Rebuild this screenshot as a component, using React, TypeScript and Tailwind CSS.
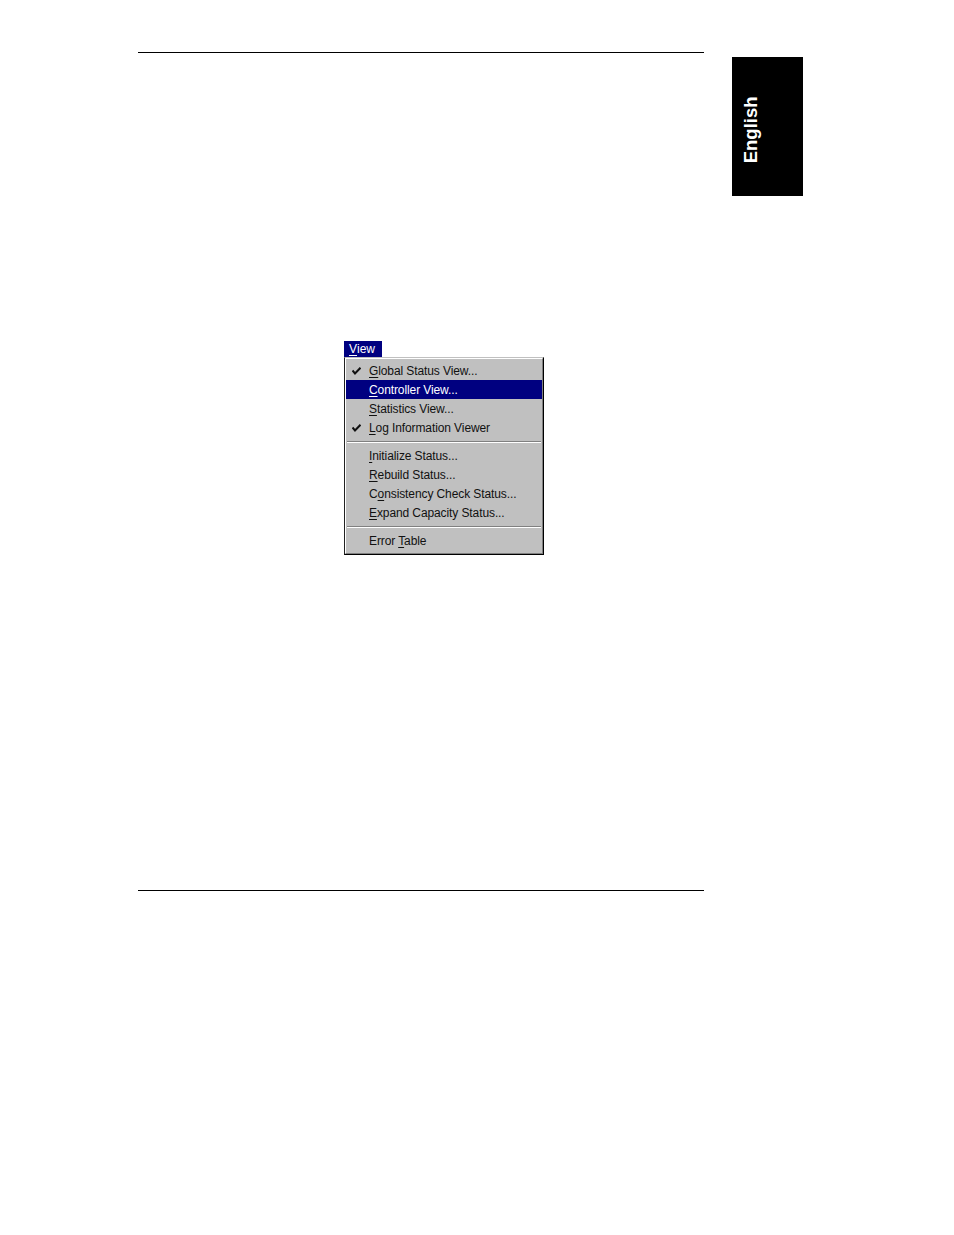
import React from 'react'

type Item = { pre: string; key: string; post: string; checked?: boolean; active?: boolean }

const groups: Item[][] = [
  [
    { pre: '', key: 'G', post: 'lobal Status View...', checked: true },
    { pre: '', key: 'C', post: 'ontroller View...', active: true },
    { pre: '', key: 'S', post: 'tatistics View...' },
    { pre: '', key: 'L', post: 'og Information Viewer', checked: true },
  ],
  [
    { pre: '', key: 'I', post: 'nitialize Status...' },
    { pre: '', key: 'R', post: 'ebuild Status...' },
    { pre: 'C', key: 'o', post: 'nsistency Check Status...' },
    { pre: '', key: 'E', post: 'xpand Capacity Status...' },
  ],
  [{ pre: 'Error ', key: 'T', post: 'able' }],
]

function Check() {
  return (
    <svg width="9" height="8" viewBox="0 0 9 8" className="absolute left-[6px] top-[6px]">
      <path d="M0.5 3.5 L3 6.5 L8.5 0.8" fill="none" stroke="currentColor" strokeWidth="2" />
    </svg>
  )
}

function Row({ item }: { item: Item }) {
  return (
    <div
      className={`relative flex h-[19px] items-center pl-[23px] ${
        item.active ? 'bg-[#000080] text-white' : 'text-[#111]'
      }`}
    >
      {item.checked && <Check />}
      <span className="tracking-[-0.1px]">
        {item.pre}
        <span className="underline underline-offset-2">{item.key}</span>
        {item.post}
      </span>
    </div>
  )
}

function Separator() {
  return (
    <div className="flex h-[9px] flex-col justify-center px-[1px]">
      <div className="h-px bg-[#808080]" />
      <div className="h-px bg-white" />
    </div>
  )
}

function ViewMenu() {
  return (
    <div className="flex flex-col items-start text-[12px] leading-none" style={{ fontFamily: '"Liberation Sans", Arial, sans-serif' }}>
      <div className="flex h-[16px] w-[38px] items-center bg-[#000080] pl-[5px] text-white">
        <span className="underline underline-offset-2">V</span>iew
      </div>
      <div className="w-[200px] border border-t-[#c0c0c0] border-l-[#202020] border-r-black border-b-black">
        <div className="border border-t-white border-l-white border-r-[#808080] border-b-[#808080] bg-[#c0c0c0] pt-[2px] pb-[3px]">
          {groups.map((g, gi) => (
            <div key={gi}>
              {gi > 0 && <Separator />}
              {g.map((item) => (
                <Row key={item.key + item.post} item={item} />
              ))}
            </div>
          ))}
        </div>
      </div>
    </div>
  )
}

export default function App() {
  return (
    <div className="h-[1235px] w-[954px] bg-white">
      <div className="flex pl-[138px]">
        <div className="w-[566px] pt-[52px]">
          <div className="h-px bg-black" />
          <div className="ml-[206px] mt-[288px]">
            <ViewMenu />
          </div>
          <div className="mt-[335px] h-px bg-black" />
        </div>
        <div className="ml-[28px] mt-[57px] flex h-[139px] w-[71px] items-center bg-black pl-[8px] pt-[6px]">
          <div className="flex w-[20px] justify-center">
            <span
              className="inline-block shrink-0 -rotate-90 whitespace-nowrap text-[18.5px] font-bold text-white"
              style={{ fontFamily: '"Liberation Sans", Arial, sans-serif' }}
            >
              English
            </span>
          </div>
        </div>
      </div>
    </div>
  )
}
